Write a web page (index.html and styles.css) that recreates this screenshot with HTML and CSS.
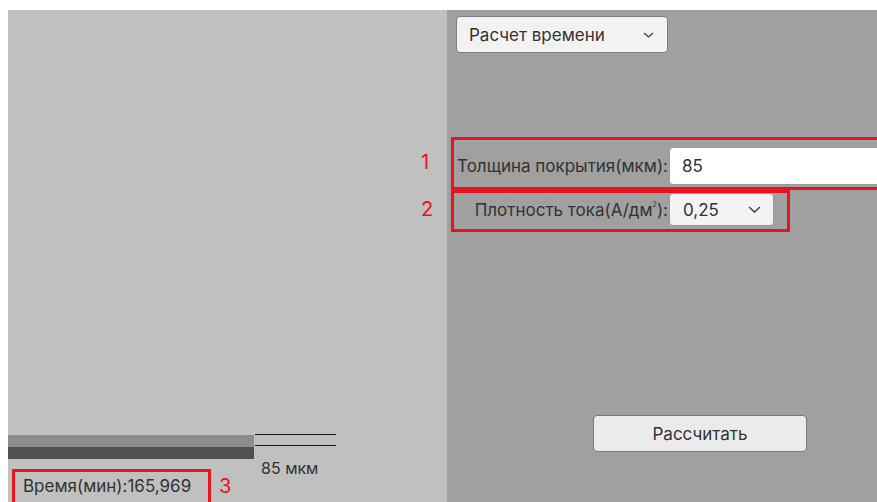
FILE: index.html
```html
<!DOCTYPE html>
<html lang="ru">
<head>
<meta charset="utf-8">
<title>Расчет времени</title>
<link rel="stylesheet" href="styles.css">
</head>
<body>
<div class="screen">
  <section class="stage">
    <div class="gauge">
      <div class="layers">
        <div class="layer coat"></div>
        <div class="layer base"></div>
      </div>
      <div class="scale">
        <div class="rule"></div>
        <div class="rule second"></div>
        <span class="scale-label">85 мкм</span>
      </div>
    </div>
    <div class="readout mark">Время(мин):165,969<span class="badge badge-3">3</span></div>
  </section>

  <section class="panel">
    <div class="select mode">
      <span>Расчет времени</span>
      <svg class="chev" width="11" height="6" viewBox="0 0 11 6"><path d="M1 1l4.5 4 4.5-4" fill="none" stroke="#3a3a3a" stroke-width="1.3"/></svg>
    </div>

    <div class="field mark field-thick">
      <span class="badge badge-1">1</span>
      <label class="field-label">Толщина покрытия(мкм):</label>
      <div class="input">85</div>
    </div>

    <div class="field mark field-density">
      <span class="badge badge-2">2</span>
      <label class="field-label">Плотность тока(А/дм<sup>2</sup>):</label>
      <div class="select small">
        <span>0,25</span>
        <svg class="chev" width="13" height="7" viewBox="0 0 13 7"><path d="M1 1l5.5 5 5.5-5" fill="none" stroke="#3a3a3a" stroke-width="1.3"/></svg>
      </div>
    </div>

    <button class="action">Рассчитать</button>
  </section>
</div>
</body>
</html>
```

FILE: styles.css
```css
html, body {
  margin: 0;
  padding: 0;
  background: #ffffff;
  overflow: hidden;
}

body {
  width: 877px;
  height: 502px;
  font-family: Inter, "Liberation Sans", Arial, sans-serif;
  color: #323232;
}

.screen {
  display: flex;
  height: 492px;
  margin-top: 10px;
  margin-left: 8px;
}

/* left: coating preview */
.stage {
  flex: 0 0 439px;
  background: #c0c0c0;
  display: flex;
  flex-direction: column;
  justify-content: flex-end;
}

.gauge {
  display: flex;
  align-items: flex-start;
  height: 35px;
}

.layers {
  width: 246px;
  margin-top: 1px;
  display: flex;
  flex-direction: column;
}

.layer {
  height: 12px;
}

.coat { background: #8c8c8c; }
.base { background: #505050; }

.scale {
  width: 81px;
  margin-left: 1px;
  display: flex;
  flex-direction: column;
}

.rule {
  height: 1px;
  background: #141414;
}

.rule.second {
  margin-top: 10px;
}

.scale-label {
  margin-top: 13px;
  padding-left: 6px;
  font-size: 16px;
  line-height: 18px;
}

.mark {
  border: 3px solid #e8141c;
  position: relative;
}

.readout {
  width: 177px;
  margin-left: 4px;
  margin-bottom: -5px;
  padding: 4px 8px 8px 8px;
  font-size: 17px;
  line-height: 20px;
  white-space: nowrap;
}

.badge {
  position: absolute;
  color: #e8141c;
  font-size: 20px;
  line-height: 22px;
}

.badge-3 {
  left: calc(100% + 11px);
  top: 3px;
}

.badge-1 {
  left: -33px;
  top: 11px;
}

.badge-2 {
  left: -33px;
  top: 5px;
}

/* right: calculation form */
.panel {
  flex: 1 1 0;
  min-width: 0;
  background: #a0a0a0;
  display: flex;
  flex-direction: column;
  align-items: flex-start;
}

.select {
  display: flex;
  align-items: center;
  justify-content: space-between;
  box-sizing: border-box;
  background: #f2f2f2;
  border: 1px solid #7e7e7e;
  border-radius: 4px;
}

.mode {
  width: 212px;
  height: 37px;
  margin-top: 6px;
  margin-left: 9px;
  padding: 0 13px 0 12px;
  font-size: 17px;
}

.field {
  display: flex;
  margin-left: 4px;
  flex-shrink: 0;
}

.field-label {
  width: 214px;
  text-align: right;
  font-size: 17px;
  margin-right: 1px;
  align-self: center;
  white-space: nowrap;
}

.field-label sup {
  font-size: 7px;
  vertical-align: 9px;
  line-height: 0;
}

.field-thick {
  width: 450px;
  margin-top: 84px;
  padding: 7px 0 2px 0;
}

.input {
  box-sizing: border-box;
  width: 230px;
  height: 38px;
  background: #ffffff;
  border: 1px solid #9a9a9a;
  border-radius: 4px;
  padding-left: 12px;
  font-size: 17px;
  display: flex;
  align-items: center;
}

.field-density {
  width: 333px;
  padding: 0 0 3px 0;
}

.small {
  width: 105px;
  height: 33px;
  padding: 0 12px 0 13px;
  font-size: 17px;
  background: #f3f3f3;
  border-color: #9a9a9a;
}

.action {
  width: 214px;
  height: 37px;
  margin-top: 183px;
  margin-left: 146px;
  background: #ebebeb;
  border: 1px solid #7a7a7a;
  border-radius: 4px;
  font-family: inherit;
  font-size: 17px;
  color: #323232;
  padding: 0;
}
```
